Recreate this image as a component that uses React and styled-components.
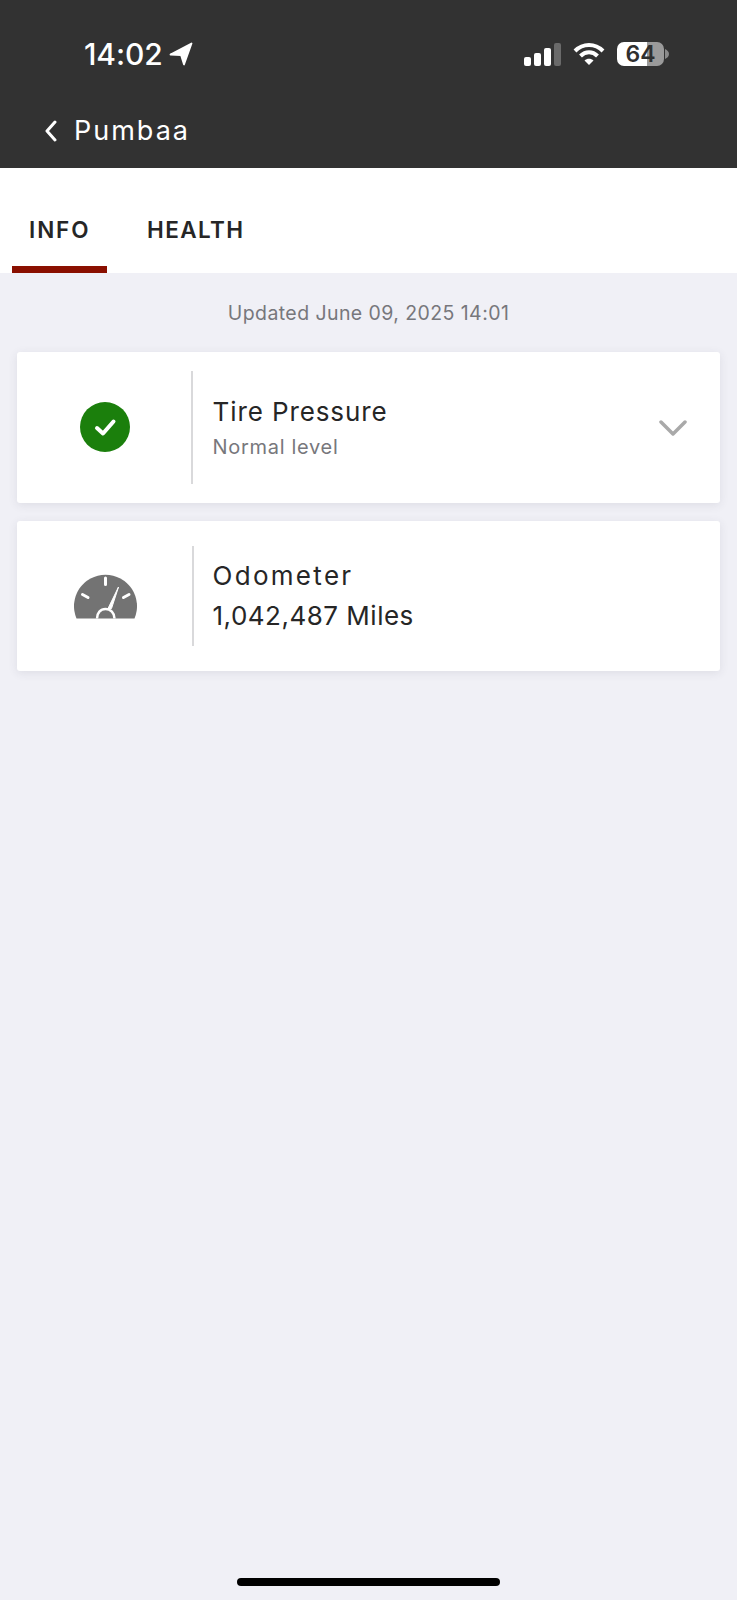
import React from "react";
import styled, { createGlobalStyle } from "styled-components";

const Global = createGlobalStyle`
  html, body { margin: 0; padding: 0; background: #f0f0f6; }
  body { font-family: Inter, "Open Sans", "Liberation Sans", sans-serif; }
`;

const Page = styled.div`
  width: 737px;
  height: 1600px;
  display: flex;
  flex-direction: column;
  background: #f0f0f6;
  overflow: hidden;
`;

const Header = styled.header`
  height: 168px;
  flex: none;
  background: #323232;
  color: #fff;
  display: flex;
  flex-direction: column;
`;

const StatusBar = styled.div`
  display: flex;
  align-items: center;
  justify-content: space-between;
  height: 36px;
  margin-top: 36px;
  padding: 0 68px 0 84px;
`;

const TimeGroup = styled.div`
  display: flex;
  align-items: center;
  gap: 6px;
`;

const Time = styled.span`
  font-size: 30px;
  font-weight: 500;
  letter-spacing: -0.1px;
  line-height: 36px;
`;

const StatusIcons = styled.div`
  display: flex;
  align-items: center;
  gap: 12px;
`;

const Battery = styled.div`
  display: flex;
  align-items: center;
  gap: 1px;
`;

const BatteryBody = styled.div`
  width: 47px;
  height: 24px;
  border-radius: 7px;
  background: linear-gradient(90deg, #fff 0 64%, #9a9a9a 64% 100%);
  color: #2f2f2f;
  font-size: 23px;
  font-weight: 600;
  line-height: 24px;
  text-align: center;
`;

const NavBar = styled.div`
  display: flex;
  align-items: center;
  gap: 16px;
  margin-top: 42px;
  padding-left: 44px;
  height: 34px;
`;

const NavTitle = styled.span`
  font-size: 27px;
  font-weight: 400;
  letter-spacing: 2px;
  line-height: 34px;
`;

const Tabs = styled.nav`
  height: 105px;
  flex: none;
  background: #fff;
  display: flex;
  padding-left: 12px;
`;

const Tab = styled.div`
  height: 100%;
  box-sizing: border-box;
  width: ${(p) => p.$width}px;
  padding: 48px 0 0 ${(p) => p.$pad}px;
  font-size: 22.5px;
  font-weight: 600;
  letter-spacing: ${(p) => p.$spacing}px;
  line-height: 28px;
  color: #262626;
  border-bottom: 7px solid ${(p) => (p.$active ? "#8a0f00" : "transparent")};
`;

const Updated = styled.div`
  margin-top: 27px;
  height: 26px;
  text-align: center;
  font-size: 19.5px;
  line-height: 26px;
  font-weight: 400;
  letter-spacing: 0.42px;
  color: #77777c;
`;

const Cards = styled.main`
  display: flex;
  flex-direction: column;
  gap: 18px;
  margin-top: 26px;
  padding: 0 17px;
`;

const Card = styled.section`
  height: ${(p) => p.$height}px;
  display: flex;
  align-items: center;
  background: #fff;
  border-radius: 3px;
  box-shadow: 0 2px 10px rgba(60, 60, 80, 0.1);
`;

const IconSlot = styled.div`
  width: ${(p) => p.$width}px;
  flex: none;
  display: flex;
  justify-content: center;
  padding-left: ${(p) => p.$left || 0}px;
  box-sizing: border-box;
`;

const Divider = styled.div`
  width: 1.5px;
  height: ${(p) => p.$height}px;
  flex: none;
  background: #d9d9db;
`;

const CardText = styled.div`
  flex: 1;
  padding-left: ${(p) => p.$left}px;
  display: flex;
  flex-direction: column;
`;

const CardTitle = styled.div`
  font-size: 26px;
  line-height: 36px;
  font-weight: 400;
  letter-spacing: ${(p) => p.$spacing}px;
  color: #262626;
`;

const CardSub = styled.div`
  margin-top: 3px;
  font-size: 20px;
  line-height: 28px;
  font-weight: 400;
  letter-spacing: 0.7px;
  color: #77777c;
`;

const CardValue = styled(CardTitle)`
  margin-top: 4px;
`;

const Chevron = styled.div`
  width: 28px;
  margin-right: 33px;
  display: flex;
`;

const HomeBar = styled.div`
  width: 263px;
  height: 8px;
  border-radius: 4px;
  background: #000;
  margin: auto auto 14px;
`;

export default function App() {
  return (
    <Page>
      <Global />
      <Header>
        <StatusBar>
          <TimeGroup>
            <Time>14:02</Time>
            <svg width="24" height="24" viewBox="0 0 24 24">
              <path d="M1.500 12.500 L22.500 1.500 L15 22.500 L12 13 Z" fill="#fff" stroke="#fff" strokeWidth="1.800" strokeLinejoin="round" />
            </svg>
          </TimeGroup>
          <StatusIcons>
            <svg width="37" height="24" viewBox="0 0 37 24">
              <rect x="0" y="15" width="7" height="9" rx="2" fill="#fff" />
              <rect x="10" y="11" width="7" height="13" rx="2" fill="#fff" />
              <rect x="20" y="6" width="7" height="18" rx="2" fill="#fff" />
              <rect x="30" y="1" width="7" height="23" rx="2" fill="#6a6a6a" />
            </svg>
            <svg width="32" height="24" viewBox="0 0 32 24" fill="none" stroke="#fff" strokeWidth="4">
              <path d="M2 9 C10 1 22 1 30 9" />
              <path d="M7.500 14 C12.500 9 19.500 9 24.500 14" />
              <path d="M16 23 L11.500 18.500 C14 16 18 16 20.500 18.500 Z" fill="#fff" stroke="none" />
            </svg>
            <Battery>
              <BatteryBody>64</BatteryBody>
              <svg width="4" height="10" viewBox="0 0 4 10">
                <path d="M0 0 C2.500 1 4 3 4 5 C4 7 2.500 9 0 10 Z" fill="#8a8a8a" />
              </svg>
            </Battery>
          </StatusIcons>
        </StatusBar>
        <NavBar>
          <svg width="14" height="22" viewBox="0 0 14 22" fill="none" stroke="#fff" strokeWidth="3" strokeLinecap="round" strokeLinejoin="round">
            <path d="M11 2 L3 11 L11 20" />
          </svg>
          <NavTitle>Pumbaa</NavTitle>
        </NavBar>
      </Header>
      <Tabs>
        <Tab $active $width={95} $pad={17} $spacing={1.9}>INFO</Tab>
        <Tab $width={160} $pad={40} $spacing={1.4}>HEALTH</Tab>
      </Tabs>
      <Updated>Updated June 09, 2025 14:01</Updated>
      <Cards>
        <Card $height={151}>
          <IconSlot $width={174} $left={2}>
            <svg width="50" height="52" viewBox="0 0 50 52">
              <circle cx="25" cy="25" r="25" fill="#1b7f0c" />
              <path d="M17 26 L23 31.500 L33.500 19.500" fill="none" stroke="#fff" strokeWidth="4" strokeLinecap="round" strokeLinejoin="round" />
            </svg>
          </IconSlot>
          <Divider $height={113} />
          <CardText $left={20}>
            <CardTitle $spacing={0.9}>Tire Pressure</CardTitle>
            <CardSub>Normal level</CardSub>
          </CardText>
          <Chevron>
            <svg width="28" height="16" viewBox="0 0 28 16" fill="none" stroke="#a9a9a9" strokeWidth="3.500" strokeLinecap="round" strokeLinejoin="round">
              <path d="M2 2 L14 14 L26 2" />
            </svg>
          </Chevron>
        </Card>
        <Card $height={150}>
          <IconSlot $width={175} $left={1}>
            <svg width="63" height="46" viewBox="0 0 63 46">
              <path d="M2.500 45.500 A31.500 31.500 0 1 1 60.500 45.500 Z" fill="#737373" />
              <path d="M31.500 5 V11.500 M8.500 21.500 L14 24.500 M55 21.500 L49.500 24.500" stroke="#fff" strokeWidth="3" strokeLinecap="round" />
              <path d="M34 35.500 L37.500 35.500 L44.500 14 Z" fill="#fff" stroke="#fff" strokeWidth="1" strokeLinejoin="round" />
              <path d="M23 45.500 C23 40 26.500 36 31.500 36 C36.500 36 40.500 40 40.500 45.500" fill="none" stroke="#fff" strokeWidth="2.500" />
            </svg>
          </IconSlot>
          <Divider $height={100} />
          <CardText $left={19}>
            <CardTitle $spacing={2.3}>Odometer</CardTitle>
            <CardValue $spacing={0.5}>1,042,487 Miles</CardValue>
          </CardText>
        </Card>
      </Cards>
      <HomeBar />
    </Page>
  );
}
